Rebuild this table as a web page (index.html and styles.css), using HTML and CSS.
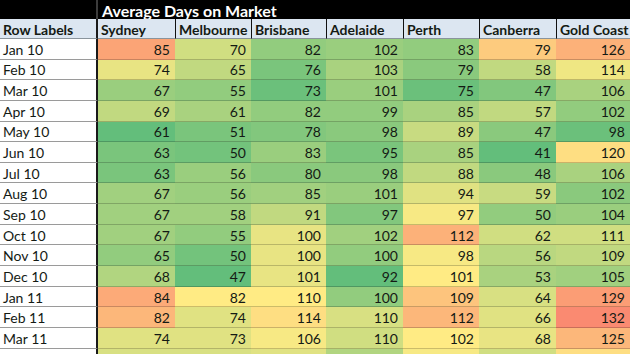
FILE: index.html
```html
<!DOCTYPE html>
<html lang="en">
<head>
<meta charset="utf-8">
<title>Average Days on Market</title>
<link rel="stylesheet" href="styles.css">
</head>
<body>
<div class="sheet">
  <div class="corner"></div>
  <div class="title">Average Days on Market</div>

  <div class="lbl head">Row Labels</div>
  <div class="hdr first">Sydney</div>
  <div class="hdr">Melbourne</div>
  <div class="hdr">Brisbane</div>
  <div class="hdr">Adelaide</div>
  <div class="hdr">Perth</div>
  <div class="hdr">Canberra</div>
  <div class="hdr">Gold Coast</div>

  <div class="lbl">Jan 10</div>
  <div class="c" style="background:rgb(251,164,118)">85</div>
  <div class="c" style="background:rgb(208,222,129)">70</div>
  <div class="c" style="background:rgb(146,204,126)">82</div>
  <div class="c" style="background:rgb(154,206,126)">102</div>
  <div class="c" style="background:rgb(146,204,126)">83</div>
  <div class="c" style="background:rgb(253,203,126)">79</div>
  <div class="c" style="background:rgb(252,177,121)">126</div>

  <div class="lbl">Feb 10</div>
  <div class="c" style="background:rgb(232,228,131)">74</div>
  <div class="c" style="background:rgb(193,217,128)">65</div>
  <div class="c" style="background:rgb(122,197,124)">76</div>
  <div class="c" style="background:rgb(169,210,127)">103</div>
  <div class="c" style="background:rgb(138,201,125)">79</div>
  <div class="c" style="background:rgb(193,217,128)">58</div>
  <div class="c" style="background:rgb(239,231,131)">114</div>

  <div class="lbl">Mar 10</div>
  <div class="c" style="background:rgb(154,206,126)">67</div>
  <div class="c" style="background:rgb(146,204,126)">55</div>
  <div class="c" style="background:rgb(107,192,123)">73</div>
  <div class="c" style="background:rgb(154,206,126)">101</div>
  <div class="c" style="background:rgb(107,192,123)">75</div>
  <div class="c" style="background:rgb(130,199,125)">47</div>
  <div class="c" style="background:rgb(169,210,127)">106</div>

  <div class="lbl">Apr 10</div>
  <div class="c" style="background:rgb(193,217,128)">69</div>
  <div class="c" style="background:rgb(169,210,127)">61</div>
  <div class="c" style="background:rgb(146,204,126)">82</div>
  <div class="c" style="background:rgb(146,204,126)">99</div>
  <div class="c" style="background:rgb(169,210,127)">85</div>
  <div class="c" style="background:rgb(193,217,128)">57</div>
  <div class="c" style="background:rgb(146,204,126)">102</div>

  <div class="lbl">May 10</div>
  <div class="c" style="background:rgb(99,190,123)">61</div>
  <div class="c" style="background:rgb(122,197,124)">51</div>
  <div class="c" style="background:rgb(130,199,125)">78</div>
  <div class="c" style="background:rgb(138,201,125)">98</div>
  <div class="c" style="background:rgb(200,219,129)">89</div>
  <div class="c" style="background:rgb(138,201,125)">47</div>
  <div class="c" style="background:rgb(107,192,123)">98</div>

  <div class="lbl">Jun 10</div>
  <div class="c" style="background:rgb(122,197,124)">63</div>
  <div class="c" style="background:rgb(115,195,124)">50</div>
  <div class="c" style="background:rgb(154,206,126)">83</div>
  <div class="c" style="background:rgb(122,197,124)">95</div>
  <div class="c" style="background:rgb(169,210,127)">85</div>
  <div class="c" style="background:rgb(99,190,123)">41</div>
  <div class="c" style="background:rgb(254,222,130)">120</div>

  <div class="lbl">Jul 10</div>
  <div class="c" style="background:rgb(122,197,124)">63</div>
  <div class="c" style="background:rgb(154,206,126)">56</div>
  <div class="c" style="background:rgb(138,201,125)">80</div>
  <div class="c" style="background:rgb(138,201,125)">98</div>
  <div class="c" style="background:rgb(193,217,128)">88</div>
  <div class="c" style="background:rgb(138,201,125)">48</div>
  <div class="c" style="background:rgb(169,210,127)">106</div>

  <div class="lbl">Aug 10</div>
  <div class="c" style="background:rgb(161,208,127)">67</div>
  <div class="c" style="background:rgb(154,206,126)">56</div>
  <div class="c" style="background:rgb(161,208,127)">85</div>
  <div class="c" style="background:rgb(154,206,126)">101</div>
  <div class="c" style="background:rgb(224,226,130)">94</div>
  <div class="c" style="background:rgb(200,219,129)">59</div>
  <div class="c" style="background:rgb(138,201,125)">102</div>

  <div class="lbl">Sep 10</div>
  <div class="c" style="background:rgb(161,208,127)">67</div>
  <div class="c" style="background:rgb(161,208,127)">58</div>
  <div class="c" style="background:rgb(193,217,128)">91</div>
  <div class="c" style="background:rgb(130,199,125)">97</div>
  <div class="c" style="background:rgb(247,233,132)">97</div>
  <div class="c" style="background:rgb(146,204,126)">50</div>
  <div class="c" style="background:rgb(154,206,126)">104</div>

  <div class="lbl">Oct 10</div>
  <div class="c" style="background:rgb(161,208,127)">67</div>
  <div class="c" style="background:rgb(146,204,126)">55</div>
  <div class="c" style="background:rgb(232,228,131)">100</div>
  <div class="c" style="background:rgb(161,208,127)">102</div>
  <div class="c" style="background:rgb(252,177,121)">112</div>
  <div class="c" style="background:rgb(208,222,129)">62</div>
  <div class="c" style="background:rgb(208,222,129)">111</div>

  <div class="lbl">Nov 10</div>
  <div class="c" style="background:rgb(146,204,126)">65</div>
  <div class="c" style="background:rgb(115,195,124)">50</div>
  <div class="c" style="background:rgb(232,228,131)">100</div>
  <div class="c" style="background:rgb(146,204,126)">100</div>
  <div class="c" style="background:rgb(247,233,132)">98</div>
  <div class="c" style="background:rgb(185,215,128)">56</div>
  <div class="c" style="background:rgb(193,217,128)">109</div>

  <div class="lbl">Dec 10</div>
  <div class="c" style="background:rgb(177,213,128)">68</div>
  <div class="c" style="background:rgb(99,190,123)">47</div>
  <div class="c" style="background:rgb(232,228,131)">101</div>
  <div class="c" style="background:rgb(99,190,123)">92</div>
  <div class="c" style="background:rgb(255,235,132)">101</div>
  <div class="c" style="background:rgb(169,210,127)">53</div>
  <div class="c" style="background:rgb(161,208,127)">105</div>

  <div class="lbl">Jan 11</div>
  <div class="c" style="background:rgb(252,170,120)">84</div>
  <div class="c" style="background:rgb(255,235,132)">82</div>
  <div class="c" style="background:rgb(255,235,132)">110</div>
  <div class="c" style="background:rgb(146,204,126)">100</div>
  <div class="c" style="background:rgb(253,196,125)">109</div>
  <div class="c" style="background:rgb(216,224,130)">64</div>
  <div class="c" style="background:rgb(251,157,117)">129</div>

  <div class="lbl">Feb 11</div>
  <div class="c" style="background:rgb(252,183,122)">82</div>
  <div class="c" style="background:rgb(224,226,130)">74</div>
  <div class="c" style="background:rgb(254,222,130)">114</div>
  <div class="c" style="background:rgb(216,224,130)">110</div>
  <div class="c" style="background:rgb(252,183,122)">112</div>
  <div class="c" style="background:rgb(224,226,130)">66</div>
  <div class="c" style="background:rgb(250,138,113)">132</div>

  <div class="lbl">Mar 11</div>
  <div class="c" style="background:rgb(224,226,130)">74</div>
  <div class="c" style="background:rgb(224,226,130)">73</div>
  <div class="c" style="background:rgb(247,233,132)">106</div>
  <div class="c" style="background:rgb(208,222,129)">110</div>
  <div class="c" style="background:rgb(255,235,132)">102</div>
  <div class="c" style="background:rgb(232,228,131)">68</div>
  <div class="c" style="background:rgb(252,183,122)">125</div>

  <div class="lbl"></div>
  <div class="c" style="background:rgb(216,224,130)"></div>
  <div class="c" style="background:rgb(216,224,130)"></div>
  <div class="c" style="background:rgb(224,226,130)"></div>
  <div class="c" style="background:rgb(177,213,128)"></div>
  <div class="c" style="background:rgb(247,233,132)"></div>
  <div class="c" style="background:rgb(208,222,129)"></div>
  <div class="c" style="background:rgb(254,222,130)"></div>
</div>
</body>
</html>
```

FILE: styles.css
```css
html, body {
  margin: 0;
  padding: 0;
  background: #ffffff;
  overflow: hidden;
}

.sheet {
  display: grid;
  grid-template-columns: 98px 77px 76px 75px 77px 76px 77px 74px;
  grid-template-rows: 19px 20px repeat(16, 20.65px);
  width: 630px;
  font-family: Lato, "Liberation Sans", sans-serif;
  font-size: 14px;
  color: #141a14;
}

.sheet > div {
  box-sizing: border-box;
  display: flex;
  align-items: center;
  white-space: nowrap;
  overflow: hidden;
}

.corner {
  background: #000000;
  border-right: 2px solid #3c3c3c;
}

.title {
  grid-column: 2 / 9;
  background: #000000;
  color: #ffffff;
  font-weight: 700;
  font-size: 16px;
  padding-left: 4px;
  padding-top: 1px;
}

.lbl {
  background: #ffffff;
  border-right: 2px solid #1a1a1a;
  border-bottom: 1px solid #9a9a9a;
  padding-left: 3px;
  padding-top: 1px;
}

.lbl.head {
  background: #dce6f1;
  font-weight: 700;
  border-bottom: 1px solid #8a949c;
}

.hdr {
  background: #dce6f1;
  font-weight: 700;
  border-left: 1px solid #111111;
  border-bottom: 1px solid #8a949c;
  padding-left: 3px;
  padding-top: 1px;
}

.hdr.first {
  border-left: none;
}

.c {
  justify-content: flex-end;
  padding-right: 5px;
  padding-top: 1px;
  border-bottom: 1px solid rgba(0, 0, 0, 0.2);
}
```
